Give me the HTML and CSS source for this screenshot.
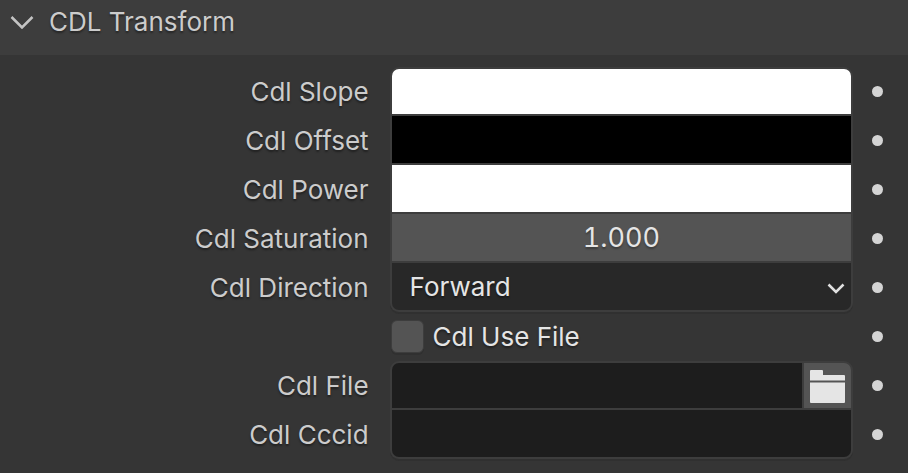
FILE: index.html
```html
<!DOCTYPE html>
<html lang="en">
<head>
  <meta charset="UTF-8" />
  <meta name="viewport" content="width=device-width, initial-scale=1.0"/>
  <title>CDL Transform</title>
  <link rel="stylesheet" href="styles.css">
</head>
<body>

  <!-- Panel header -->
  <button class="panel-header" type="button" aria-expanded="true">
    <svg class="arrow" width="24" height="14" viewBox="0 0 24 14"><path d="M1.5 2 L12 12.5 L22.5 2"/></svg>
    CDL Transform
  </button>

  <!-- Panel body -->
  <div class="panel-body">

    <div class="row">
      <label for="slope">Cdl Slope</label>
      <div class="field first"><input type="color" id="slope" value="#ffffff" /></div>
      <button class="dot" type="button" aria-label="Animate slope"></button>
    </div>

    <div class="row">
      <label for="offset">Cdl Offset</label>
      <div class="field"><input type="color" id="offset" value="#000000" /></div>
      <button class="dot" type="button" aria-label="Animate offset"></button>
    </div>

    <div class="row">
      <label for="power">Cdl Power</label>
      <div class="field"><input type="color" id="power" value="#ffffff" /></div>
      <button class="dot" type="button" aria-label="Animate power"></button>
    </div>

    <div class="row">
      <label for="saturation">Cdl Saturation</label>
      <div class="field"><input type="text" inputmode="decimal" class="number" id="saturation" value="1.000" /></div>
      <button class="dot" type="button" aria-label="Animate saturation"></button>
    </div>

    <div class="row">
      <label for="direction">Cdl Direction</label>
      <div class="field last">
        <select id="direction">
          <option>Forward</option>
          <option>Inverse</option>
        </select>
        <svg class="chevron" width="18" height="12" viewBox="0 0 18 12"><path d="M1.5 1.5 L9 9 L16.5 1.5"/></svg>
      </div>
      <button class="dot" type="button" aria-label="Animate direction"></button>
    </div>

    <div class="row">
      <div class="check">
        <input type="checkbox" id="use-file" />
        <label for="use-file">Cdl Use File</label>
      </div>
      <button class="dot" type="button" aria-label="Animate use file"></button>
    </div>

    <div class="row">
      <label for="file">Cdl File</label>
      <div class="field first">
        <input type="text" id="file" />
        <button class="browse" type="button" aria-label="Browse files">
          <svg width="36" height="34" viewBox="0 0 36 34"><path d="M1 2 Q1 1 2 1 H13 Q14 1 14 2 V6 H35 Q36 6 36 7 V11.5 H1 Z M1 13.5 H36 V33 Q36 34 35 34 H2 Q1 34 1 33 Z"/></svg>
        </button>
      </div>
      <button class="dot" type="button" aria-label="Animate file"></button>
    </div>

    <div class="row">
      <label for="cccid">Cdl Cccid</label>
      <div class="field last"><input type="text" id="cccid" /></div>
      <button class="dot" type="button" aria-label="Animate cccid"></button>
    </div>

  </div>

</body>
</html>
```
FILE: styles.css
```css
* { box-sizing: border-box; margin: 0; padding: 0; }
body { font-family: Inter, sans-serif; font-size: 26px; background: #353535; color: #cccccc; }
button, input, select { font: inherit; color: #e5e5e5; border: none; border-radius: 0; outline: none; appearance: none; }
label, .panel-header { text-shadow: 0 2px 2px rgba(0,0,0,0.4); }

.panel-header { width: 100%; height: 55px; padding: 0 10px 12px; display: flex; align-items: center; gap: 15px; background: #3d3d3d; color: #cccccc; text-align: left; }
.arrow { fill: none; stroke: #c4c4c4; stroke-width: 2.5; }

.panel-body { padding: 12px 25px 14px 23px; }
.row { height: 49px; display: grid; grid-template-columns: 3fr 4fr 11px; column-gap: 19px; align-items: center; }
.row > label { padding-right: 2px; text-align: right; white-space: nowrap; }

.field { height: 49px; display: flex; position: relative; min-width: 0; overflow: hidden; background: #3d3d3d; border: solid #3d3d3d; border-width: 0 2px 2px; }
.field.first { border-top-width: 2px; border-radius: 9px 9px 0 0; }
.field.last { border-radius: 0 0 9px 9px; box-shadow: 0 2px 0 #303030; }
.field input, .field select { flex: 1; width: 100%; min-width: 0; height: 100%; }
.field input[type="text"] { padding: 0 18px; background: #1d1d1d; }
.field input.number { background: #545454; font-size: 27px; text-align: center; font-variant-numeric: tabular-nums; text-shadow: 0 2px 2px rgba(0,0,0,0.3); }
.field input[type="color"] { background: none; }
input[type="color"]::-webkit-color-swatch-wrapper { padding: 0; }
input[type="color"]::-webkit-color-swatch { border: none; border-radius: 0; }
.field select { padding: 0 18px; background: #282828; text-shadow: 0 2px 2px rgba(0,0,0,0.4); }
.chevron { position: absolute; right: 6px; top: 20px; fill: none; stroke: #e0e0e0; stroke-width: 2.5; pointer-events: none; }

.check { grid-column: 2; display: flex; align-items: center; gap: 9px; padding-left: 1px; color: #e5e5e5; }
.check input { width: 33px; height: 33px; border: 1px solid #3d3d3d; border-radius: 6px; background: #545454; box-shadow: 0 2px 0 #303030; }
.check input:checked { background: #4772b3; }

.browse { width: 49px; height: 100%; display: flex; align-items: center; justify-content: center; border-left: 2px solid #3d3d3d; background: #545454; }
.browse svg { fill: #e5e5e5; }

.dot { width: 11px; height: 11px; border-radius: 50%; background: #d4d4d4; }
```
